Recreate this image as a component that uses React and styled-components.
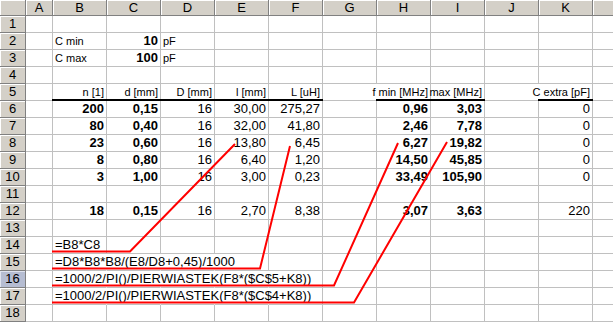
import React from "react";
import styled, {createGlobalStyle} from "styled-components";

const GlobalStyle = createGlobalStyle`
  html, body {
    margin: 0;
    padding: 0;
    background: #ffffff;
    overflow: hidden;
  }
`;

const COLS = ["A", "B", "C", "D", "E", "F", "G", "H", "I", "J", "K", "L"];
const ROW_COUNT = 18;
const ACTIVE_ROW = 16;

// r = right aligned, b = bold, s = small label text,
// open = text runs over the right gridline, thick = medium bottom border
const num = (t, b) => ({t, r: true, b});
const head = (t) => ({t, r: true, s: true, thick: true});

const data = {
  2: {B: {t: "C min", s: true}, C: num("10", true), D: {t: "pF", s: true}},
  3: {B: {t: "C max", s: true}, C: num("100", true), D: {t: "pF", s: true}},
  5: {
    B: head("n [1]"),
    C: head("d [mm]"),
    D: head("D [mm]"),
    E: head("l [mm]"),
    F: head("L [uH]"),
    G: {open: true},
    H: head("f min [MHz]"),
    I: head("max [MHz]"),
    J: {open: true},
    K: head("C extra [pF]"),
  },
  14: {B: {t: "=B8*C8"}},
  15: {
    B: {t: "=D8*B8*B8/(E8/D8+0,45)/1000", open: true},
    C: {open: true},
    D: {open: true},
  },
  16: {
    B: {t: "=1000/2/PI()/PIERWIASTEK(F8*($C$5+K8))", open: true},
    C: {open: true},
    D: {open: true},
    E: {open: true},
  },
  17: {
    B: {t: "=1000/2/PI()/PIERWIASTEK(F8*($C$4+K8))", open: true},
    C: {open: true},
    D: {open: true},
    E: {open: true},
  },
};

const coils = [
  [6, "200", "0,15", "16", "30,00", "275,27", "0,96", "3,03", "0"],
  [7, "80", "0,40", "16", "32,00", "41,80", "2,46", "7,78", "0"],
  [8, "23", "0,60", "16", "13,80", "6,45", "6,27", "19,82", "0"],
  [9, "8", "0,80", "16", "6,40", "1,20", "14,50", "45,85", "0"],
  [10, "3", "1,00", "16", "3,00", "0,23", "33,49", "105,90", "0"],
  [12, "18", "0,15", "16", "2,70", "8,38", "3,07", "3,63", "220"],
];

coils.forEach(([row, n, d, D, l, L, fmin, fmax, cx]) => {
  data[row] = {
    B: num(n, true),
    C: num(d, true),
    D: num(D),
    E: num(l),
    F: num(L),
    H: num(fmin, true),
    I: num(fmax, true),
    K: num(cx),
  };
});

const annotations = [
  "52,251.5 130,251.5 235,144",
  "52,268.5 260,268.5 290,146",
  "52,285.5 334,285.5 398,143",
  "52,302.5 354,302.5 447,142",
];

const Wrap = styled.div`
  position: relative;
  width: 613px;
  height: 322px;
  overflow: hidden;
  background: #ffffff;
`;

const Sheet = styled.div`
  display: grid;
  grid-template-columns: 26px 27px repeat(11, 54px);
  grid-template-rows: 16px repeat(${ROW_COUNT}, 17px);
  font-family: "Liberation Sans", Arial, sans-serif;
  font-size: 13px;
  color: #000000;
`;

const HeadBase = styled.div`
  box-sizing: border-box;
  display: flex;
  align-items: center;
  justify-content: center;
  background: #d4d0c8;
  border-right: 1px solid #808080;
  border-bottom: 1px solid #808080;
  box-shadow: inset 1px 1px 0 #ffffff;
  line-height: 15px;
  white-space: nowrap;
`;

const Corner = styled(HeadBase)``;

const ColHead = styled(HeadBase)``;

const RowHead = styled(HeadBase)`
  background: ${(p) => (p.$active ? "#b6bdd2" : "#d4d0c8")};
  box-shadow: inset 1px 1px 0 ${(p) => (p.$active ? "#dfe3ee" : "#ffffff")};
  line-height: 16px;
`;

const Cell = styled.div`
  box-sizing: border-box;
  display: flex;
  align-items: flex-end;
  justify-content: ${(p) => (p.$right ? "flex-end" : "flex-start")};
  min-width: 0;
  padding: 0 2px 0 2px;
  background: transparent;
  border-right: 1px solid ${(p) => (p.$open ? "transparent" : "#c0c0c0")};
  border-bottom: 1px solid #c0c0c0;
  font-size: ${(p) => (p.$small ? "11px" : "13px")};
  font-weight: ${(p) => (p.$bold ? 700 : 400)};
  line-height: ${(p) => (p.$small ? "15px" : "16px")};
  white-space: nowrap;

  ${(p) =>
    p.$thick &&
    `
    position: relative;
    &::after {
      content: "";
      position: absolute;
      left: -1px;
      right: -1px;
      bottom: -1px;
      height: 2px;
      background: #000000;
    }
  `}
`;

const Overlay = styled.svg`
  position: absolute;
  top: 0;
  left: 0;
  pointer-events: none;
`;

const App = () => {
  const rows = Array.from({length: ROW_COUNT}, (_, i) => i + 1);

  return (
    <>
      <GlobalStyle />
      <Wrap>
        <Sheet>
          <Corner />
          {COLS.map((c) => (
            <ColHead key={c}>{c === "L" ? "" : c}</ColHead>
          ))}
          {rows.map((row) => (
            <React.Fragment key={row}>
              <RowHead $active={row === ACTIVE_ROW}>{row}</RowHead>
              {COLS.map((c) => {
                const cell = (data[row] && data[row][c]) || {};
                return (
                  <Cell
                    key={c}
                    $right={cell.r}
                    $bold={cell.b}
                    $small={cell.s}
                    $open={cell.open}
                    $thick={cell.thick}
                  >
                    {cell.t}
                  </Cell>
                );
              })}
            </React.Fragment>
          ))}
        </Sheet>
        <Overlay width="613" height="322" viewBox="0 0 613 322">
          {annotations.map((pts) => (
            <polyline
              key={pts}
              points={pts}
              fill="none"
              stroke="#ff0000"
              strokeWidth="2"
            />
          ))}
        </Overlay>
      </Wrap>
    </>
  );
};

export default App;
